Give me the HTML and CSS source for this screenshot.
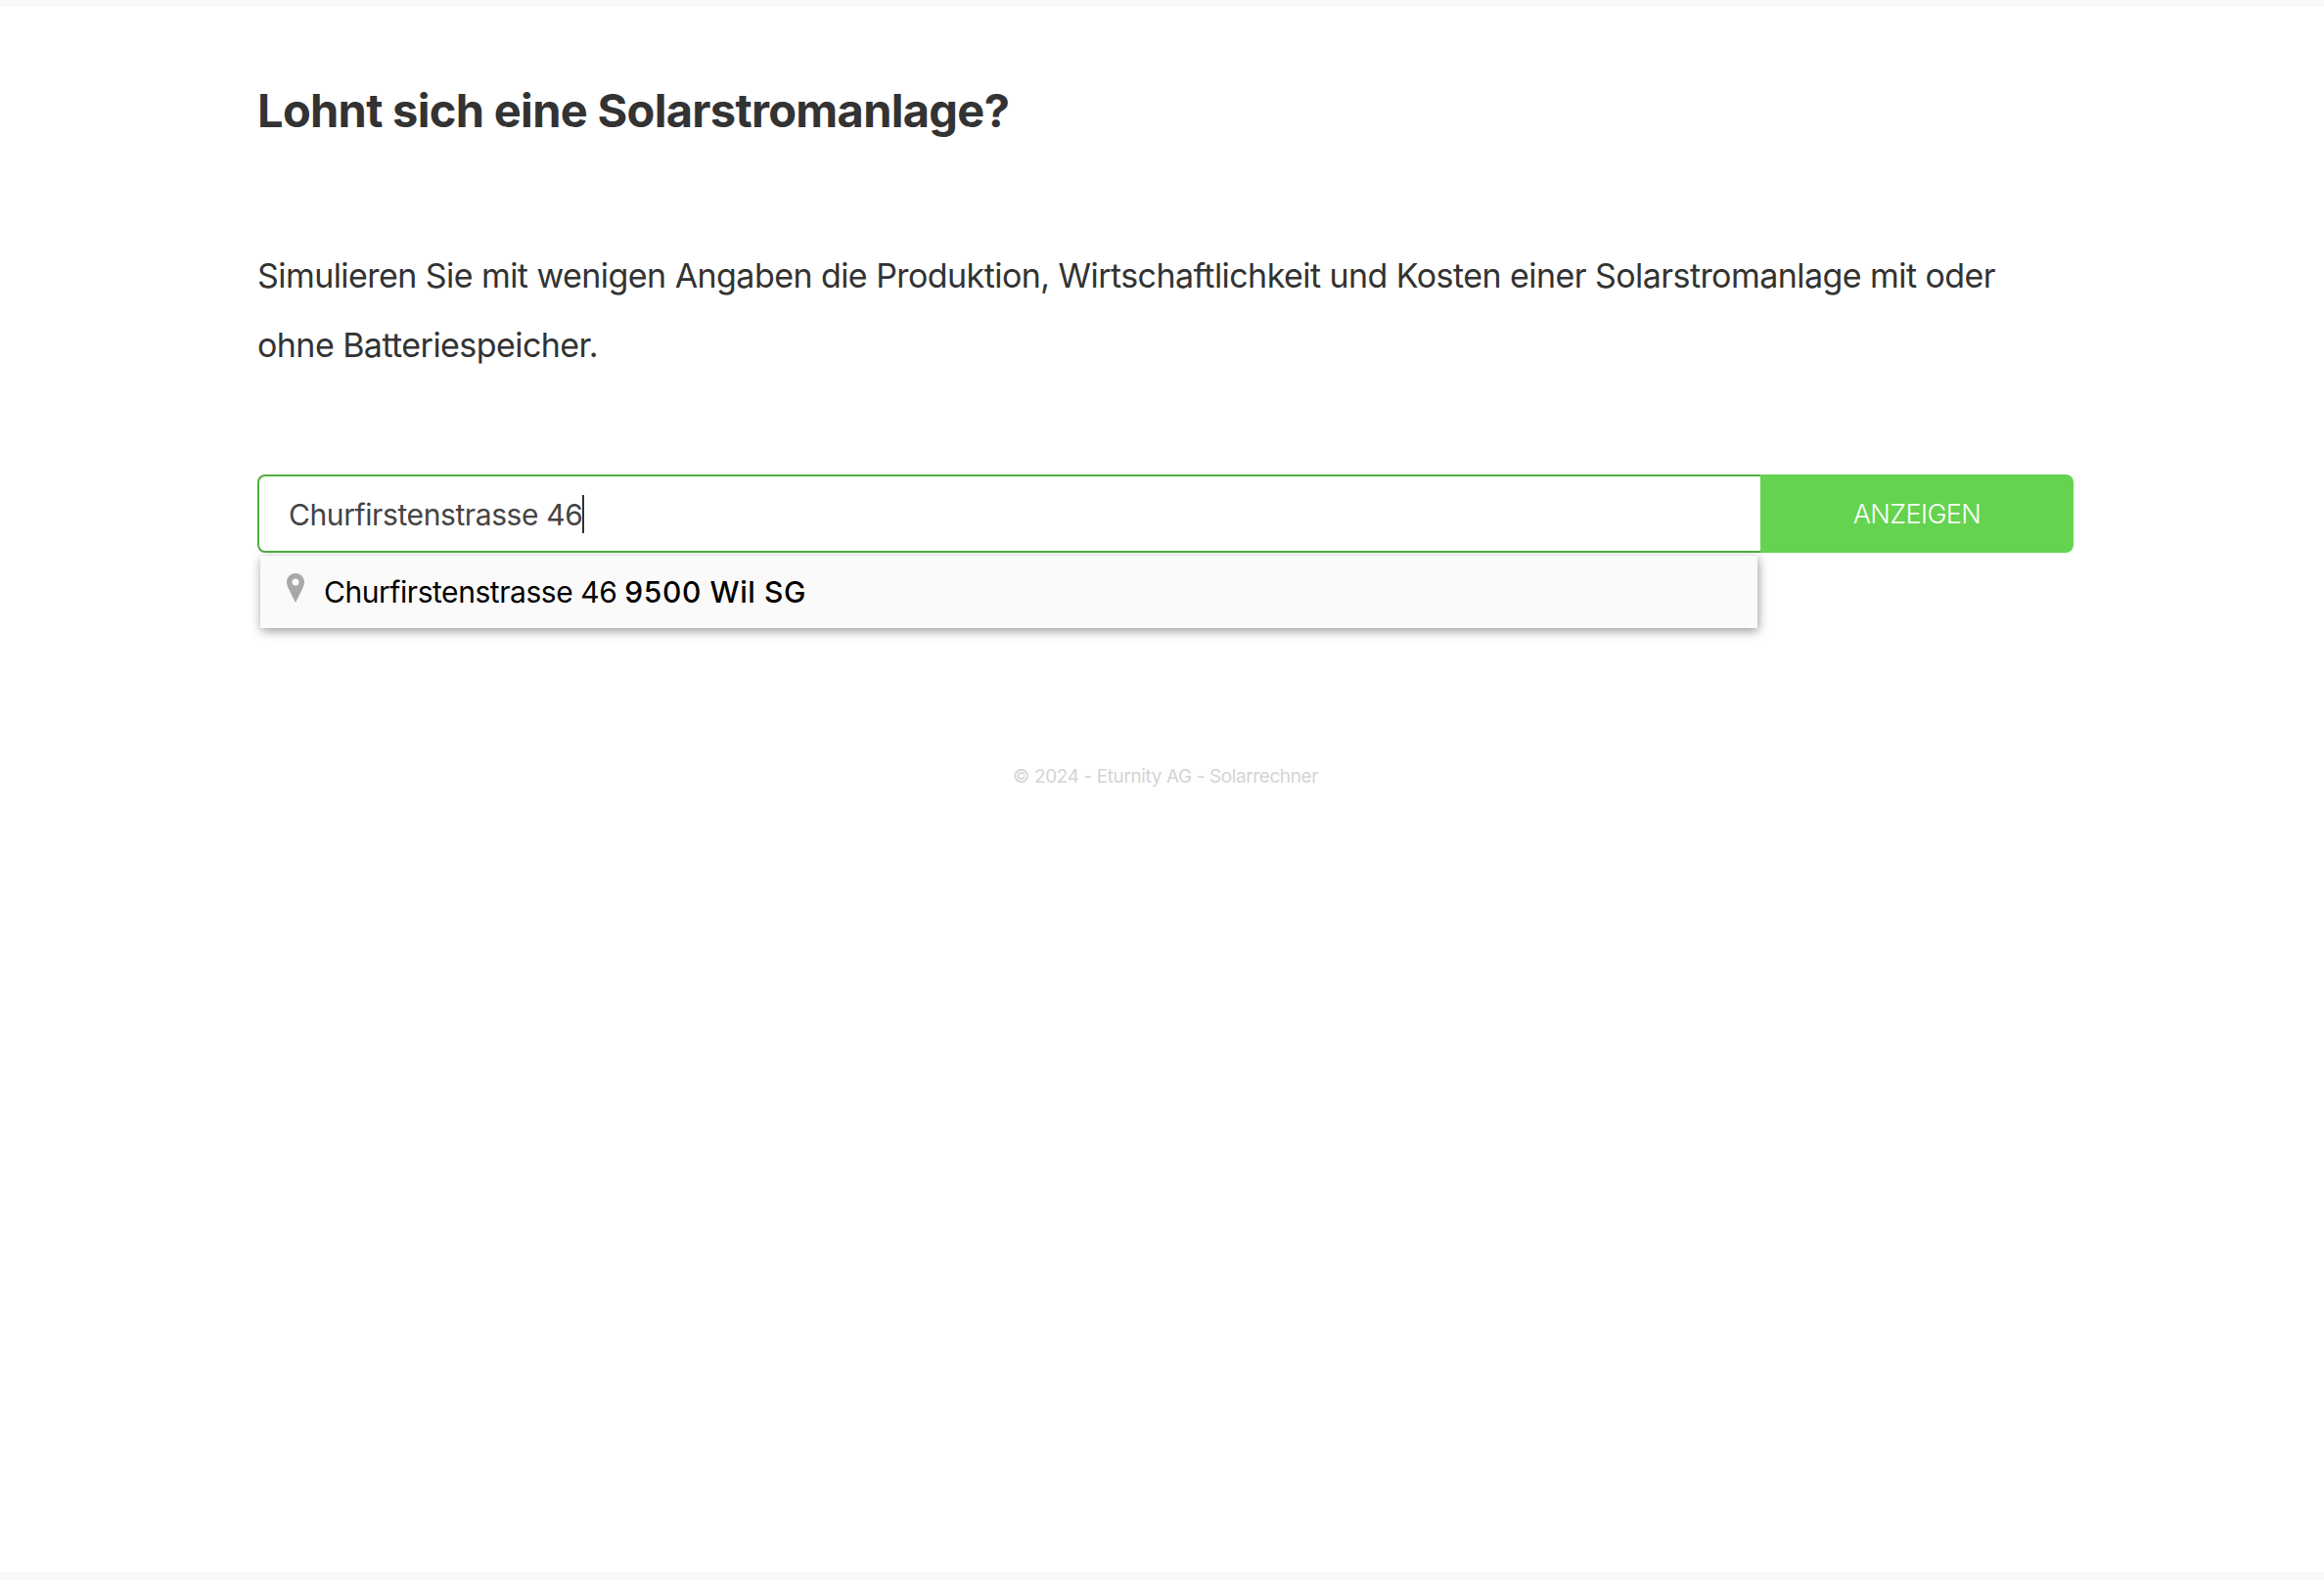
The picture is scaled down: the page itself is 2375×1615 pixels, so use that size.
FILE: index.html
```html
<!DOCTYPE html>
<html lang="de">
  <head>
    <meta charset="UTF-8" />
    <meta name="viewport" content="width=device-width, initial-scale=1.0" />
    <title>Solarrechner</title>
    <link rel="stylesheet" href="styles.css">
  </head>
  <body>
    <div class="page">
      <main class="content">
        <h1 class="title">Lohnt sich eine Solarstromanlage?</h1>
        <p class="intro">Simulieren Sie mit wenigen Angaben die Produktion, Wirtschaftlichkeit und Kosten einer Solarstromanlage mit oder ohne Batteriespeicher.</p>

        <form class="search">
          <div class="search-field">
            <span class="search-value">Churfirstenstrasse 46</span><span class="caret"></span>
          </div>
          <button type="button" class="search-button">ANZEIGEN</button>

          <div class="suggestions">
            <div class="suggestion">
              <svg class="pin" viewBox="0 0 18 30" width="18" height="30" aria-hidden="true">
                <path fill-rule="evenodd" d="M9 0C4 0 0 4 0 9c0 2.500.9 4.500 2 7l7 14 7-14c1.100-2.500 2-4.500 2-7 0-5-4-9-9-9zm0 5.500a3.500 3.500 0 1 1 0 7 3.500 3.500 0 0 1 0-7z"/>
              </svg>
              <span class="suggestion-text">Churfirstenstrasse 46 <b>9500 Wil SG</b></span>
            </div>
          </div>
        </form>

        <footer class="copyright">© 2024 - Eturnity AG - Solarrechner</footer>
      </main>
    </div>
  </body>
</html>
```

FILE: styles.css
```css
/* Basic Reset */
* {
  margin: 0;
  padding: 0;
  box-sizing: border-box;
}

body {
  background-color: #fff;
  font-family: "Inter", "Liberation Sans", sans-serif;
  color: #333;
}

.page {
  min-height: 1615px;
  border-top: 7px solid #f8f8f8;
  border-bottom: 8px solid #f8f8f8;
}

.content {
  padding: 0 256px 0 263px;
}

.title {
  padding-top: 76px;
  font-size: 47px;
  line-height: 60px;
  font-weight: 700;
  letter-spacing: -0.69px;
  color: #333;
}

.intro {
  margin-top: 103px;
  max-width: 1800px;
  font-size: 34px;
  line-height: 71px;
  font-weight: 400;
  letter-spacing: -0.56px;
  color: #333;
}

/* Search row */
.search {
  position: relative;
  display: flex;
  margin-top: 97px;
  height: 80px;
}

.search-field {
  flex: 1;
  display: flex;
  align-items: center;
  padding: 2px 0 0 30px;
  border: 2px solid #4fb03f;
  border-right: none;
  border-radius: 8px 0 0 8px;
  font-size: 30px;
  letter-spacing: -0.4px;
  color: #444;
}

.caret {
  width: 2px;
  height: 39px;
  margin: -2px 0 0 0;
  background-color: #333;
}

.search-button {
  width: 320px;
  border: none;
  border-radius: 0 8px 8px 0;
  background-color: #64d34f;
  color: #fff;
  font-family: inherit;
  font-size: 27px;
  font-weight: 300;
  letter-spacing: -0.6px;
}

/* Autocomplete dropdown */
.suggestions {
  position: absolute;
  top: 83px;
  left: 3px;
  width: 1530px;
  height: 74px;
  background-color: #fafafa;
  box-shadow: 1px 3px 10px rgba(0, 0, 0, 0.4);
}

.suggestion {
  display: flex;
  align-items: center;
  height: 100%;
  padding-left: 27px;
}

.pin {
  fill: #a8a8a8;
  margin-top: -8px;
}

.suggestion-text {
  margin-left: 20px;
  font-size: 30px;
  letter-spacing: -0.45px;
  color: #000;
}

.suggestion-text b {
  font-weight: 500;
  letter-spacing: 0.6px;
}

.copyright {
  margin-top: 217px;
  text-align: center;
  font-size: 19px;
  letter-spacing: -0.4px;
  color: #d4d4d4;
}
```
